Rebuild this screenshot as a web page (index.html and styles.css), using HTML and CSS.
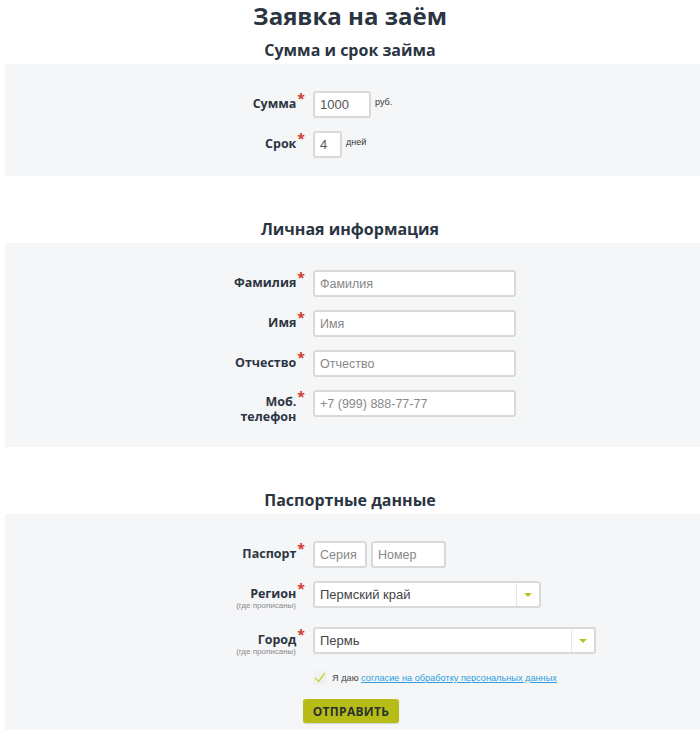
FILE: index.html
```html
<!DOCTYPE html>
<html lang="ru">
<head>
<meta charset="utf-8">
<title>Заявка на заём</title>
<link rel="stylesheet" href="styles.css">
</head>
<body>
<form class="form">
  <h1 class="title">Заявка на заём</h1>

  <h2 class="section-title">Сумма и срок займа</h2>
  <div class="panel panel-sum">
    <div class="row">
      <label class="label">Сумма<span class="req">*</span></label>
      <div class="field"><input class="input input-sum" value="1000"><span class="unit">руб.</span></div>
    </div>
    <div class="row">
      <label class="label">Срок<span class="req">*</span></label>
      <div class="field"><input class="input input-term" value="4"><span class="unit">дней</span></div>
    </div>
  </div>

  <h2 class="section-title section-gap">Личная информация</h2>
  <div class="panel panel-personal">
    <div class="row">
      <label class="label">Фамилия<span class="req">*</span></label>
      <div class="field"><input class="input input-wide" placeholder="Фамилия"></div>
    </div>
    <div class="row">
      <label class="label">Имя<span class="req">*</span></label>
      <div class="field"><input class="input input-wide" placeholder="Имя"></div>
    </div>
    <div class="row">
      <label class="label">Отчество<span class="req">*</span></label>
      <div class="field"><input class="input input-wide" placeholder="Отчество"></div>
    </div>
    <div class="row">
      <label class="label label-two"><span class="label-line">Моб.<span class="req">*</span></span><span class="label-line">телефон<span class="req req-hidden">*</span></span></label>
      <div class="field"><input class="input input-wide" placeholder="+7 (999) 888-77-77"></div>
    </div>
  </div>

  <h2 class="section-title section-gap">Паспортные данные</h2>
  <div class="panel panel-passport">
    <div class="row">
      <label class="label">Паспорт<span class="req">*</span></label>
      <div class="field"><input class="input input-series" placeholder="Серия"><input class="input input-number" placeholder="Номер"></div>
    </div>
    <div class="row row-sub">
      <label class="label">Регион<span class="req">*</span><span class="sub">(где прописаны)</span></label>
      <div class="field">
        <div class="select select-region"><span class="select-value">Пермский край</span><span class="select-arrow"></span></div>
      </div>
    </div>
    <div class="row row-sub">
      <label class="label">Город<span class="req">*</span><span class="sub">(где прописаны)</span></label>
      <div class="field">
        <div class="select select-city"><span class="select-value">Пермь</span><span class="select-arrow"></span></div>
      </div>
    </div>
    <div class="agree">
      <span class="check"><svg width="12" height="12" viewBox="0 0 12 12"><path d="M1.5 6.5 L4.5 9.5 L10.5 1.5" fill="none" stroke="#cfd64a" stroke-width="1.6" stroke-linecap="round" stroke-linejoin="round"/></svg></span>
      <span class="agree-text">Я даю <a class="agree-link" href="#">согласие на обработку персональных данных</a></span>
    </div>
    <div class="actions">
      <button type="button" class="submit">ОТПРАВИТЬ</button>
    </div>
  </div>
</form>
</body>
</html>
```

FILE: styles.css
```css
* { box-sizing: border-box; }

html, body {
  margin: 0;
  padding: 0;
  background: #ffffff;
}

body {
  font-family: "Liberation Sans", Arial, sans-serif;
  color: #333;
}

.form {
  display: flex;
  flex-direction: column;
}

.title {
  margin: 0;
  padding-top: 2px;
  font-family: "Open Sans", sans-serif;
  font-weight: 700;
  font-size: 24px;
  line-height: 28px;
  color: #2b3542;
  text-align: center;
}

.section-title {
  margin: 8px 0 2px;
  font-family: "Open Sans", sans-serif;
  font-weight: 700;
  font-size: 16px;
  line-height: 24px;
  color: #2b3542;
  text-align: center;
}

.section-gap { margin-top: 41px; }

.panel {
  margin-left: 5px;
  background: #f5f6f8;
  display: flex;
  flex-direction: column;
  gap: 13px;
}

.panel-sum { padding: 27px 0 18px; }
.panel-personal { padding: 27px 0 23px; }
.panel-passport { padding: 27px 0 7px; }

.row {
  display: grid;
  grid-template-columns: 300px auto;
  column-gap: 8px;
  align-items: start;
}

.row-sub + .row-sub { margin-top: 3px; }

.label {
  font-family: "Open Sans", sans-serif;
  font-weight: 700;
  font-size: 12.5px;
  line-height: 14px;
  color: #2b3542;
  text-align: right;
  padding-top: 6px;
  display: block;
}

.label-two {
  display: flex;
  flex-direction: column;
  align-items: flex-end;
  gap: 1px;
  padding-top: 5px;
}

.label-line {
  display: block;
  line-height: 14px;
}

.req {
  color: #d6372b;
  font-size: 14px;
  margin-left: 1px;
  vertical-align: 4px;
  line-height: 0;
}

.req-hidden { visibility: hidden; }

.sub {
  display: block;
  font-family: "Liberation Sans", Arial, sans-serif;
  font-weight: 400;
  font-size: 8px;
  line-height: 10px;
  color: #8a8a8a;
  margin-right: 9px;
}

.field {
  display: flex;
  align-items: flex-start;
  gap: 4px;
}

.input {
  height: 27px;
  border: 2px solid #d9d9d9;
  border-radius: 3px;
  background: #fff;
  padding: 0 5px;
  font-family: "Liberation Sans", Arial, sans-serif;
  font-size: 12.5px;
  color: #555;
  outline: none;
}

.input::placeholder { color: #888; }

.input-sum { width: 58px; font-size: 13px; }
.input-term { width: 29px; font-size: 13px; }
.input-wide { width: 203px; }
.input-series { width: 54px; }
.input-number { width: 75px; }

.unit {
  font-size: 9px;
  color: #333;
  margin-top: 6px;
}

.select {
  height: 27px;
  border: 2px solid #d9d9d9;
  border-radius: 3px;
  background: #fff;
  display: flex;
  align-items: center;
}

.select-region { width: 228px; }
.select-city { width: 283px; }

.select-value {
  flex: 1;
  padding-left: 5px;
  font-size: 13px;
  color: #444;
}

.select-arrow {
  width: 23px;
  height: 100%;
  border-left: 1px solid #e6e6e6;
  display: flex;
  align-items: center;
  justify-content: center;
}

.select-arrow::before {
  content: "";
  border-left: 4px solid transparent;
  border-right: 4px solid transparent;
  border-top: 4px solid #bcc229;
}

.agree {
  display: flex;
  align-items: center;
  gap: 5px;
  margin-left: 308px;
  margin-top: 1px;
  height: 14px;
}

.check {
  width: 14px;
  height: 14px;
  display: flex;
  align-items: center;
  justify-content: center;
  background: #f0f1f3;
}

.agree-text {
  font-size: 9.2px;
  color: #444;
}

.agree-link {
  color: #2a9ee0;
  text-decoration: underline;
}

.actions {
  margin-left: 298px;
  margin-top: 1px;
}

.submit {
  width: 96px;
  height: 24px;
  border: none;
  border-radius: 3px;
  background: #b6bd16;
  font-family: "Open Sans", sans-serif;
  font-weight: 700;
  font-size: 12px;
  letter-spacing: 0.3px;
  color: #2b3030;
  padding: 0;
  box-shadow: 0 1px 1px rgba(0,0,0,0.15);
}
```
